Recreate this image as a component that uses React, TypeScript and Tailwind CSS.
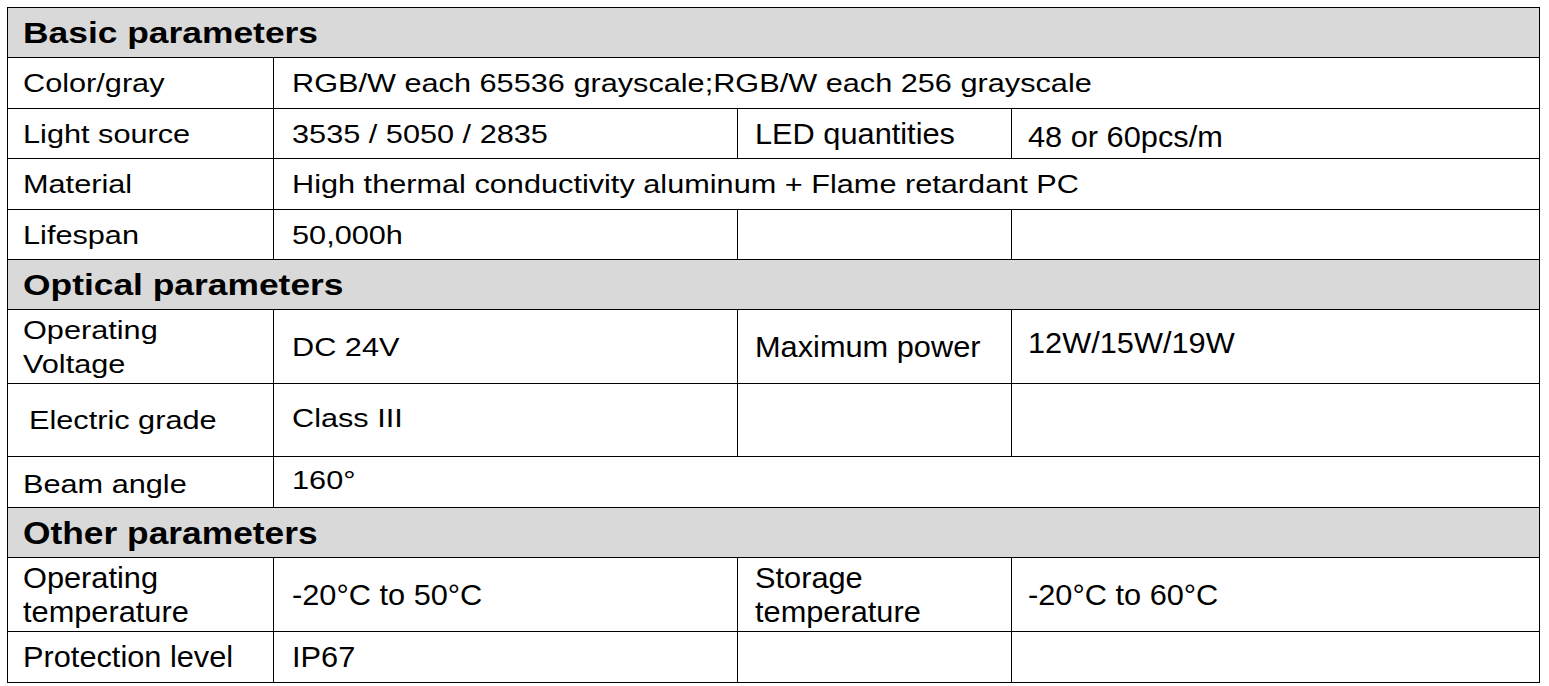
import { Fragment } from "react";

type Cell = {
  text: string | string[];
  span?: number;
  tall?: boolean;
  cls?: string;
};

type Row = { h: string; cells: Cell[] };

type Section = { title: string; tall?: boolean; rows: Row[] };

const padCols = ["pl-[15px]", "pl-[18px]", "pl-[17px]", "pl-[16px]"];

const sections: Section[] = [
  {
    title: "Basic parameters",
    rows: [
      {
        h: "h-[51px]",
        cells: [
          { text: "Color/gray" },
          { text: "RGB/W each 65536 grayscale;RGB/W each 256 grayscale", span: 3 },
        ],
      },
      {
        h: "h-[50px]",
        cells: [
          { text: "Light source" },
          { text: "3535 / 5050 / 2835" },
          { text: "LED quantities", tall: true },
          { text: "48 or 60pcs/m", tall: true, cls: "pt-[7px]" },
        ],
      },
      {
        h: "h-[51px]",
        cells: [
          { text: "Material" },
          { text: "High thermal conductivity aluminum + Flame retardant PC", span: 3 },
        ],
      },
      {
        h: "h-[50px]",
        cells: [{ text: "Lifespan" }, { text: "50,000h" }, { text: "" }, { text: "" }],
      },
    ],
  },
  {
    title: "Optical parameters",
    rows: [
      {
        h: "h-[74px]",
        cells: [
          { text: ["Operating", "Voltage"] },
          { text: "DC 24V" },
          { text: "Maximum power", tall: true },
          { text: "12W/15W/19W", tall: true, cls: "pb-[8px]" },
        ],
      },
      {
        h: "h-[73px]",
        cells: [
          { text: "Electric grade", cls: "!pl-[21px]" },
          { text: "Class III", cls: "pb-[4px]" },
          { text: "" },
          { text: "" },
        ],
      },
      {
        h: "h-[51px]",
        cells: [
          { text: "Beam angle", cls: "pt-[3px]" },
          { text: "160°", span: 3, cls: "pb-[5px]" },
        ],
      },
    ],
  },
  {
    title: "Other parameters",
    tall: true,
    rows: [
      {
        h: "h-[74px]",
        cells: [
          { text: ["Operating", "temperature"], tall: true },
          { text: "-20°C to 50°C", tall: true },
          { text: ["Storage", "temperature"], tall: true },
          { text: "-20°C to 60°C", tall: true },
        ],
      },
      {
        h: "h-[51px]",
        cells: [
          { text: "Protection level", tall: true },
          { text: "IP67", tall: true },
          { text: "" },
          { text: "" },
        ],
      },
    ],
  },
];

function Txt({ text, tall }: { text: string | string[]; tall?: boolean }) {
  const lines = Array.isArray(text) ? text : [text];
  if (!lines[0]) return null;
  return (
    <span
      className={
        tall
          ? "inline-block origin-left scale-x-[1.06] text-[29px] leading-[34px] whitespace-nowrap"
          : "inline-block origin-left scale-x-[1.18] text-[26px] leading-[34px] whitespace-nowrap"
      }
    >
      {lines.map((l, i) => (
        <span key={i} className="block">
          {l}
        </span>
      ))}
    </span>
  );
}

function SpecRow({ row }: { row: Row }) {
  let col = 0;
  return (
    <tr>
      {row.cells.map((c, i) => {
        const start = col;
        col += c.span ?? 1;
        return (
          <td
            key={i}
            colSpan={c.span}
            className={`${row.h} border border-black p-0 align-middle ${padCols[start]} ${c.cls ?? ""}`}
          >
            <Txt text={c.text} tall={c.tall} />
          </td>
        );
      })}
    </tr>
  );
}

export default function App() {
  return (
    <div
      className="min-h-[686px] bg-white pl-[7px] pt-[7px] text-black"
      style={{ fontFamily: '"Liberation Sans", Arial, sans-serif' }}
    >
      <table className="w-[1532px] table-fixed border-collapse">
        <colgroup>
          <col className="w-[266px]" />
          <col className="w-[464px]" />
          <col className="w-[274px]" />
          <col className="w-[528px]" />
        </colgroup>
        <tbody>
          {sections.map((s) => (
            <Fragment key={s.title}>
              <tr>
                <td
                  colSpan={4}
                  className="h-[50px] border border-black bg-[#d9d9d9] p-0 pl-[15px] pt-[4px] align-middle"
                >
                  <span
                    className={
                      s.tall
                        ? "inline-block origin-left scale-x-[1.14] text-[31px] font-bold leading-none"
                        : "inline-block origin-left scale-x-[1.22] text-[29px] font-bold leading-none"
                    }
                  >
                    {s.title}
                  </span>
                </td>
              </tr>
              {s.rows.map((r, i) => (
                <SpecRow key={s.title + i} row={r} />
              ))}
            </Fragment>
          ))}
        </tbody>
      </table>
    </div>
  );
}
